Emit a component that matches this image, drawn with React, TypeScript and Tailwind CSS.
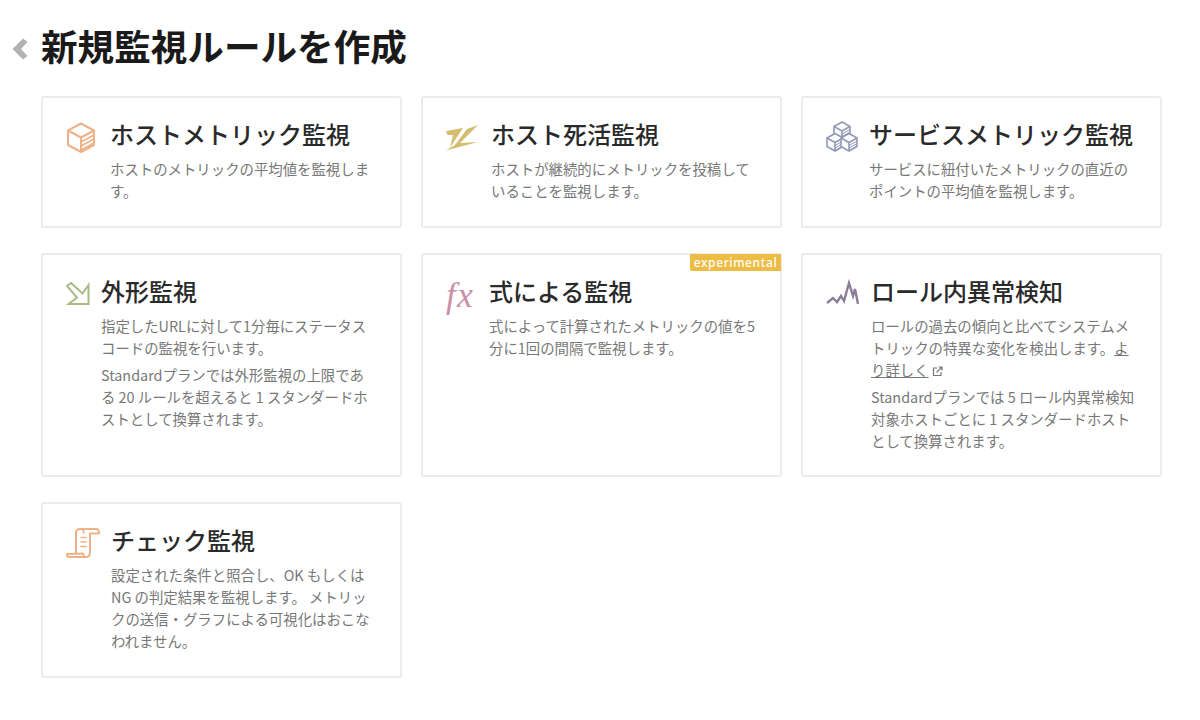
import React from "react";

const Cube = () => (
  <svg width="30" height="31" viewBox="0 0 30 31" fill="none" stroke="#efb288" strokeWidth="2" strokeLinejoin="round">
    <path d="M15 1.5 28 8.5V23L15 30 2 23V8.5Z" />
    <path d="M2 8.5 15 15.5 28 8.5M15 15.5V30" />
    <path d="M15 20 28 13M15 24 28 17M15 28 28 21" strokeWidth="1.6" />
  </svg>
);
const Bolt = () => (
  <svg width="32" height="26" viewBox="0 0 32 26" fill="#d2be6e">
    <path d="M0 6 17 3 7 18 4 23 7 10 1.5 10Z" />
    <path d="M32 0 21 4 9 20 0 25.5 32 17 14 18Z" />
  </svg>
);
const Cubes = () => {
  const c = (x: number, y: number) => (
    <g transform={`translate(${x} ${y})`}>
      <path d="M8 0 16 4.5V13L8 17.5 0 13V4.5Z" fill="#fff" />
      <path d="M0 4.5 8 9 16 4.5M8 9V17.5" />
      <path d="M8 12 16 7.5M8 14.5 16 10M8 17 16 12.5" strokeWidth="1" />
    </g>
  );
  return (
    <svg width="32" height="31" viewBox="0 0 32 31" fill="none" stroke="#9199b7" strokeWidth="1.6" strokeLinejoin="round">
      {c(8, 1)}
      {c(1, 12.5)}
      {c(15, 12.5)}
    </svg>
  );
};
const ArrowIcon = () => (
  <svg width="24" height="23" viewBox="0 0 24 23" fill="none" stroke="#a9bb84" strokeWidth="2" strokeLinejoin="miter">
    <path d="M1 4 5 1 16.5 11.5 22.5 3V22H2.5L11 15.5Z" />
  </svg>
);
const Fx = () => (
  <span className="block text-[35px] leading-[34px] italic text-[#cb8ea6] font-['Liberation_Serif',serif] tracking-[1.5px]">fx</span>
);
const Spark = () => (
  <svg width="33" height="26" viewBox="0 0 33 26" fill="none" stroke="#8b7d98" strokeWidth="2.4" strokeLinejoin="miter">
    <path d="M1 24 7 19 11 23 15 17 18 22 23 4 27 17 29 10 32 25" />
  </svg>
);
const Scroll = () => (
  <svg width="34" height="30" viewBox="0 0 34 30" fill="none" stroke="#efb288" strokeWidth="2" strokeLinejoin="round" strokeLinecap="round">
    <path d="M10 25V5C10 2.5 11.5 1 14 1H30C32 1 33 3 33 5.5H24" />
    <path d="M24 5.5V24C24 27 22.5 29 20 29H3C1.5 29 1 27.5 1 26L17 25.5C17 27 18 29 20 29" />
    <path d="M14 1C16.5 1 17.5 3 18 5M15 9.5H20M15 14H20M15 18.5H20" strokeWidth="1.6" />
  </svg>
);
const External = () => (
  <svg className="inline-block ml-[3px] -mt-[2px]" width="11" height="11" viewBox="0 0 11 11" fill="none" stroke="#777" strokeWidth="1.2">
    <path d="M5 2H1.5V9.5H9V6M4.5 6.5 9.5 1.5M6.5 1H10V4.5" />
  </svg>
);

function Card({
  icon,
  iconW,
  iconTop,
  title,
  badge,
  children,
}: {
  icon: React.ReactNode;
  iconW: string;
  iconTop: string;
  title: string;
  badge?: boolean;
  children: React.ReactNode;
}) {
  return (
    <div className="relative flex bg-white border-2 border-[#ececec] rounded-[3px] pl-[23px] pr-[22px] pt-[18px]">
      {badge && (
        <span className="absolute -right-[1px] -top-[1px] h-[17px] w-[91px] rounded-bl-[2px] bg-[#edbc45] text-white text-[12px] leading-[17px] font-medium tracking-[0.6px] text-center font-['Noto_Sans',sans-serif]">
          experimental
        </span>
      )}
      <div className={`${iconW} ${iconTop} shrink-0`}>{icon}</div>
      <div className="flex-1 min-w-0">
        <h2 className="text-[24px] leading-[36px] font-medium text-[#2a2a2a]">{title}</h2>
        <div className="mt-[6px] text-[14.4px] leading-[22px] text-[#777777] flex flex-col gap-[5px]">{children}</div>
      </div>
    </div>
  );
}

export default function App() {
  return (
    <div className="w-[1200px] h-[720px] overflow-hidden bg-white pl-[41px] pt-[19px] font-['Noto_Sans_CJK_JP','Noto_Sans',sans-serif]">
      <div className="relative flex items-center h-[54px] mb-[23px]">
        <svg className="absolute -left-[29px] top-[19px]" width="16" height="22" viewBox="0 0 16 22" fill="#b3b3b3">
          <path d="M0.5 11 11 0.5 15.5 4 9 11 15.5 18 11 21.5Z" />
        </svg>
        <h1 className="text-[36.6px] leading-[54px] font-bold text-[#1a1a1a]">新規監視ルールを作成</h1>
      </div>
      <div className="grid grid-cols-[361px_361px_361px] grid-rows-[132px_224px_176px] gap-x-[19px] gap-y-[25px]">
        <Card icon={<Cube />} iconW="w-[44px]" iconTop="pt-[6px]" title="ホストメトリック監視">
          <p>ホストのメトリックの平均値を監視します。</p>
        </Card>
        <Card icon={<Bolt />} iconW="w-[45px]" iconTop="pt-[9px]" title="ホスト死活監視">
          <p>ホストが継続的にメトリックを投稿していることを監視します。</p>
        </Card>
        <Card icon={<Cubes />} iconW="w-[43px]" iconTop="pt-[5px]" title="サービスメトリック監視">
          <p>サービスに紐付いたメトリックの直近のポイントの平均値を監視します。</p>
        </Card>
        <Card icon={<ArrowIcon />} iconW="w-[35px]" iconTop="pt-[9px]" title="外形監視">
          <p>指定したURLに対して1分毎にステータスコードの監視を行います。</p>
          <p>Standardプランでは外形監視の上限である 20 ルールを超えると 1 スタンダードホストとして換算されます。</p>
        </Card>
        <Card icon={<Fx />} iconW="w-[43px]" iconTop="pt-[6px]" title="式による監視" badge>
          <p>式によって計算されたメトリックの値を5分に1回の間隔で監視します。</p>
        </Card>
        <Card icon={<Spark />} iconW="w-[45px]" iconTop="pt-[6px]" title="ロール内異常検知">
          <p>
            ロールの過去の傾向と比べてシステムメトリックの特異な変化を検出します。
            <span className="underline">より詳しく</span>
            <External />
          </p>
          <p>Standardプランでは 5 ロール内異常検知対象ホストごとに 1 スタンダードホストとして換算されます。</p>
        </Card>
        <Card icon={<Scroll />} iconW="w-[45px]" iconTop="pt-[6px]" title="チェック監視">
          <p>設定された条件と照合し、OK もしくは NG の判定結果を監視します。 メトリックの送信・グラフによる可視化はおこなわれません。</p>
        </Card>
      </div>
    </div>
  );
}
